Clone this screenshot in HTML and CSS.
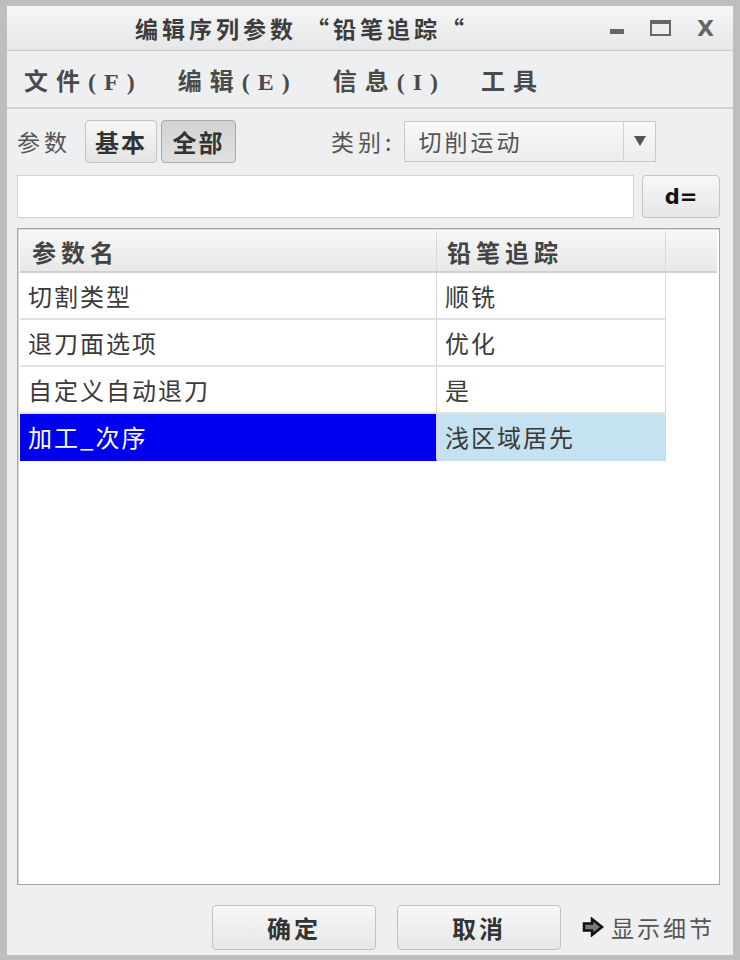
FILE: index.html
```html
<!DOCTYPE html>
<html lang="zh-CN">
<head>
  <meta charset="UTF-8" />
  <title>编辑序列参数</title>
  <link rel="stylesheet" href="styles.css">
</head>
<body>
  <div class="window">
    <div class="titlebar">
      <div class="title">编辑序列参数 “铅笔追踪“</div>
      <div class="controls">
        <span class="ctl-min"></span>
        <span class="ctl-max"></span>
        <span class="ctl-close">X</span>
      </div>
    </div>

    <div class="menubar">
      <span class="menu">文件(F)</span>
      <span class="menu">编辑(E)</span>
      <span class="menu">信息(I)</span>
      <span class="menu">工具</span>
    </div>

    <div class="content">
      <div class="toolbar">
        <span class="label">参数</span>
        <button class="tog">基本</button>
        <button class="tog pressed">全部</button>
        <span class="label cat">类别:</span>
        <div class="combo">
          <span class="combo-text">切削运动</span>
          <span class="combo-arrow"></span>
        </div>
      </div>

      <div class="search">
        <div class="input"></div>
        <button class="deq">d=</button>
      </div>

      <div class="grid">
        <div class="head">
          <div class="hcell c1">参数名</div>
          <div class="hcell c2">铅笔追踪</div>
          <div class="hcell c3"></div>
        </div>
        <div class="row">
          <div class="cell c1">切割类型</div>
          <div class="cell c2">顺铣</div>
        </div>
        <div class="row">
          <div class="cell c1">退刀面选项</div>
          <div class="cell c2">优化</div>
        </div>
        <div class="row">
          <div class="cell c1">自定义自动退刀</div>
          <div class="cell c2">是</div>
        </div>
        <div class="row selected">
          <div class="cell c1">加工_次序</div>
          <div class="cell c2">浅区域居先</div>
        </div>
      </div>

      <div class="footer">
        <button class="btn">确定</button>
        <button class="btn">取消</button>
        <span class="details">
          <svg class="arrow" width="22" height="20" viewBox="0 0 22 20">
            <path d="M2 6.5 H10 V2 L20 10 L10 18 V13.5 H2 Z" fill="#7a7a7a" stroke="#111" stroke-width="2.5" stroke-linejoin="miter"/>
          </svg>显示细节</span>
      </div>
    </div>
  </div>
</body>
</html>
```

FILE: styles.css
```css
html, body {
  margin: 0;
  height: 100%;
}

body {
  background: #bdbebf;
  padding: 6px 7px 5px 7px;
  box-sizing: border-box;
  font-family: "Noto Sans CJK SC", "Liberation Sans", sans-serif;
  color: #3a3a3a;
}

.window {
  height: 100%;
  background: #eeeff0;
  display: flex;
  flex-direction: column;
}

.titlebar {
  height: 44px;
  background: linear-gradient(#f6f6f6, #e6e7e8);
  border-bottom: 1px solid #c9c9c9;
  display: flex;
  align-items: center;
}

.title {
  flex: 1;
  text-align: center;
  font-size: 23px;
  font-weight: bold;
  color: #3c3c3c;
  padding-right: 14px;
  letter-spacing: 4px;
}

.controls {
  display: flex;
  align-items: center;
  gap: 26px;
  padding-right: 19px;
}

.ctl-min {
  width: 14px;
  height: 5px;
  background: #666;
  margin-top: 6px;
}

.ctl-max {
  width: 21px;
  height: 16px;
  border: 2px solid #666;
  border-top-width: 4px;
  box-sizing: border-box;
}

.ctl-close {
  font-family: "DejaVu Sans", sans-serif;
  font-size: 22px;
  font-weight: bold;
  color: #666;
}

.menubar {
  height: 56px;
  border-bottom: 2px solid #d3d3d4;
  display: flex;
  align-items: center;
  gap: 35px;
  padding-left: 17px;
}

.menu {
  font-family: "Liberation Serif", "Noto Sans CJK SC", serif;
  font-size: 24px;
  font-weight: bold;
  color: #4a4a4a;
  letter-spacing: 8px;
}

.content {
  flex: 1;
  display: flex;
  flex-direction: column;
  padding: 10px 13px 0 10px;
}

.toolbar {
  display: flex;
  align-items: center;
  height: 44px;
}

.label {
  font-size: 23px;
  color: #555;
  letter-spacing: 4px;
  margin-right: 14px;
}

.label.cat {
  margin-left: 91px;
  margin-right: 9px;
}

.tog {
  font-family: inherit;
  font-size: 24px;
  font-weight: bold;
  color: #333;
  width: 72px;
  height: 43px;
  padding: 0;
  margin-right: 4px;
  letter-spacing: 2px;
  border: 1px solid #c4c4c4;
  border-radius: 4px;
  background: linear-gradient(#f7f7f7, #e4e4e4);
}

.tog.pressed {
  width: 75px;
  background: linear-gradient(#d3d3d3, #e0e0e0);
  border-color: #a9a9a9;
}

.combo {
  width: 252px;
  height: 41px;
  border: 1px solid #c8c8c8;
  background: linear-gradient(#f9f9f9, #ececec);
  display: flex;
  align-items: center;
  box-sizing: border-box;
}

.combo-text {
  flex: 1;
  font-size: 23px;
  color: #555;
  letter-spacing: 3px;
  padding-left: 13px;
}

.combo-arrow {
  width: 31px;
  height: 100%;
  border-left: 1px solid #d0d0d0;
  display: flex;
  align-items: center;
  justify-content: center;
}

.combo-arrow::after {
  content: "";
  border-left: 6px solid transparent;
  border-right: 6px solid transparent;
  border-top: 10px solid #555;
}

.search {
  display: flex;
  gap: 8px;
  margin-top: 12px;
  height: 43px;
}

.input {
  flex: 1;
  background: #fff;
  border: 1px solid #d2d2d2;
}

.deq {
  width: 78px;
  font-family: "DejaVu Sans", sans-serif;
  font-size: 21px;
  font-weight: bold;
  color: #111;
  border: 1px solid #c4c4c4;
  border-radius: 4px;
  background: linear-gradient(#f8f8f8, #e6e6e6);
}

.grid {
  flex: 1;
  margin-top: 10px;
  background: #fff;
  border: 1px solid #a8a8a8;
  box-shadow: inset 1px 1px 0 #d8d8d8;
  padding: 2px 2px 0 2px;
}

.head {
  display: flex;
  height: 40px;
  background: linear-gradient(#f7f7f7, #e8e8e8);
  border-bottom: 2px solid #cfcfcf;
}

.hcell {
  font-size: 24px;
  font-weight: bold;
  color: #444;
  letter-spacing: 5px;
  display: flex;
  align-items: center;
  box-sizing: border-box;
}

.c1 {
  width: 417px;
  padding-left: 12px;
  border-right: 1px solid #d9d9d9;
  box-sizing: border-box;
}

.c2 {
  width: 229px;
  padding-left: 10px;
  border-right: 1px solid #d9d9d9;
  box-sizing: border-box;
}

.c3 {
  flex: 1;
}

.row {
  display: flex;
  height: 47px;
}

.cell {
  font-size: 24px;
  color: #3a3a3a;
  letter-spacing: 2px;
  display: flex;
  align-items: center;
  border-bottom: 2px solid #e2e2e2;
}

.cell.c1 {
  padding-left: 8px;
}

.cell.c2 {
  padding-left: 8px;
}

.selected .c1 {
  background: #0000f0;
  color: #fff;
  border-bottom-color: #0000f0;
}

.selected .c2 {
  background: #c4e2f2;
  border-bottom-color: #c4e2f2;
}

.footer {
  display: flex;
  align-items: center;
  height: 70px;
  padding: 14px 0 0 195px;
  box-sizing: border-box;
}

.btn {
  width: 164px;
  height: 45px;
  margin-right: 21px;
  font-family: inherit;
  font-size: 24px;
  font-weight: bold;
  color: #333;
  letter-spacing: 3px;
  border: 1px solid #c2c2c2;
  border-radius: 4px;
  background: linear-gradient(#f8f8f8, #e6e6e6);
}

.details {
  font-size: 23px;
  color: #555;
  letter-spacing: 3px;
  display: flex;
  align-items: center;
}

.arrow {
  margin-right: 7px;
}
```
